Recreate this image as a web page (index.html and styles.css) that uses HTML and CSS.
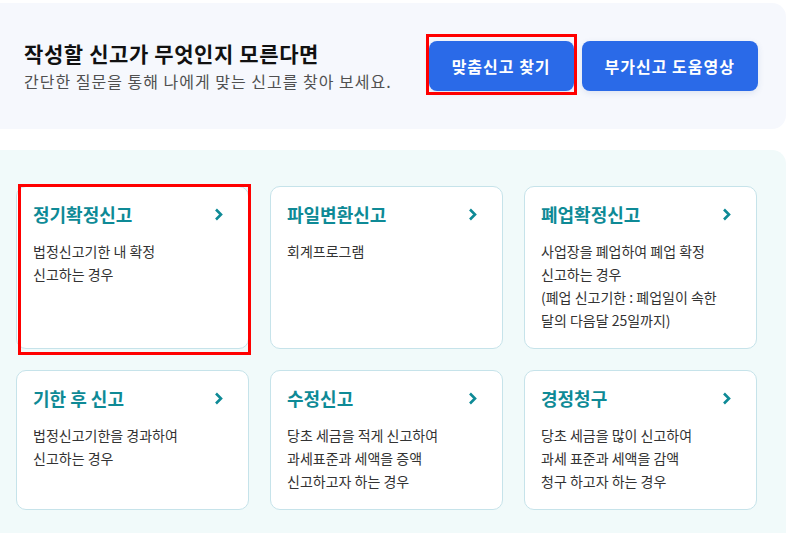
FILE: index.html
```html
<!DOCTYPE html>
<html>
<head>
<meta name="viewport" content="width=device-width, initial-scale=1">
<meta charset="UTF-8">
<link rel="stylesheet" href="styles.css">
</head>
<body>

<div class="intro">
  <div class="intro-text">
    <h2>작성할 신고가 무엇인지 모른다면</h2>
    <p>간단한 질문을 통해 나에게 맞는 신고를 찾아 보세요.</p>
  </div>
  <div class="intro-btns">
    <button class="btn marked">맞춤신고 찾기</button>
    <button class="btn">부가신고 도움영상</button>
  </div>
</div>

<div class="kinds">
  <div class="grid">
    <a class="card marked" href="#">
      <div class="card-head"><span>정기확정신고</span><svg width="9" height="13" viewBox="0 0 9 13"><polyline points="2,1.5 7,6.5 2,11.5" fill="none" stroke="#0e8a96" stroke-width="2.6"/></svg></div>
      <p>법정신고기한 내 확정<br>신고하는 경우</p>
    </a>
    <a class="card" href="#">
      <div class="card-head"><span>파일변환신고</span><svg width="9" height="13" viewBox="0 0 9 13"><polyline points="2,1.5 7,6.5 2,11.5" fill="none" stroke="#0e8a96" stroke-width="2.6"/></svg></div>
      <p>회계프로그램</p>
    </a>
    <a class="card" href="#">
      <div class="card-head"><span>폐업확정신고</span><svg width="9" height="13" viewBox="0 0 9 13"><polyline points="2,1.5 7,6.5 2,11.5" fill="none" stroke="#0e8a96" stroke-width="2.6"/></svg></div>
      <p>사업장을 폐업하여 폐업 확정<br>신고하는 경우<br>(폐업 신고기한 : 폐업일이 속한<br>달의 다음달 25일까지)</p>
    </a>
    <a class="card" href="#">
      <div class="card-head"><span>기한 후 신고</span><svg width="9" height="13" viewBox="0 0 9 13"><polyline points="2,1.5 7,6.5 2,11.5" fill="none" stroke="#0e8a96" stroke-width="2.6"/></svg></div>
      <p>법정신고기한을 경과하여<br>신고하는 경우</p>
    </a>
    <a class="card" href="#">
      <div class="card-head"><span>수정신고</span><svg width="9" height="13" viewBox="0 0 9 13"><polyline points="2,1.5 7,6.5 2,11.5" fill="none" stroke="#0e8a96" stroke-width="2.6"/></svg></div>
      <p>당초 세금을 적게 신고하여<br>과세표준과 세액을 증액<br>신고하고자 하는 경우</p>
    </a>
    <a class="card" href="#">
      <div class="card-head"><span>경정청구</span><svg width="9" height="13" viewBox="0 0 9 13"><polyline points="2,1.5 7,6.5 2,11.5" fill="none" stroke="#0e8a96" stroke-width="2.6"/></svg></div>
      <p>당초 세금을 많이 신고하여<br>과세 표준과 세액을 감액<br>청구 하고자 하는 경우</p>
    </a>
  </div>
</div>

</body>
</html>
```

FILE: styles.css
```css
body {
  margin: 0;
  background: #fff;
  font-family: "Noto Sans CJK KR", "Noto Sans", sans-serif;
  color: #222;
}

/* top box */
.intro {
  margin: 3px 10px 0 0;
  height: 126px;
  background: #f6f8fd;
  border-radius: 0 14px 14px 0;
  display: flex;
  align-items: center;
  justify-content: space-between;
  padding: 0 28px 0 24px;
}

.intro h2 {
  margin: 0;
  font-size: 21px;
  font-weight: 700;
  line-height: 28px;
  letter-spacing: 0.6px;
  color: #111;
}

.intro p {
  margin: 2px 0 0 0;
  font-size: 16px;
  line-height: 24px;
  letter-spacing: 1px;
  color: #505050;
}

.intro-btns {
  display: flex;
  gap: 8px;
}

.btn {
  position: relative;
  height: 50px;
  padding: 0 23px;
  border: 0;
  border-radius: 8px;
  background: #2a6ae8;
  color: #fff;
  font-family: inherit;
  font-size: 16px;
  font-weight: 700;
  letter-spacing: 1px;
  cursor: pointer;
  box-shadow: 0 2px 6px rgba(40, 80, 160, 0.12);
}

.btn.marked::after {
  content: "";
  position: absolute;
  top: -7px;
  bottom: -4px;
  left: -3px;
  right: -3px;
  border: 3px solid #f00;
}

/* report kinds */
.kinds {
  margin: 21px 10px 0 0;
  padding: 36px 0 30px 16px;
  background: #f1fafa;
  border-radius: 0 14px 0 0;
}

.grid {
  display: grid;
  grid-template-columns: repeat(3, 233px);
  gap: 21px;
}

.card {
  position: relative;
  display: block;
  background: #fff;
  border: 1px solid #c6e3ea;
  border-radius: 10px;
  padding: 15px 16px 16px 16px;
  text-decoration: none;
}

.card.marked::after {
  content: "";
  position: absolute;
  top: -3px;
  bottom: -7px;
  left: 1px;
  right: -3px;
  border: 3px solid #f00;
}

.card-head {
  display: flex;
  align-items: center;
  justify-content: space-between;
  padding-right: 9px;
  height: 24px;
}

.card-head span {
  font-size: 18px;
  font-weight: 700;
  color: #0e8a96;
}

.card p {
  margin: 14px 0 0 0;
  font-size: 14px;
  line-height: 23px;
  color: #333;
  white-space: nowrap;
}
```
